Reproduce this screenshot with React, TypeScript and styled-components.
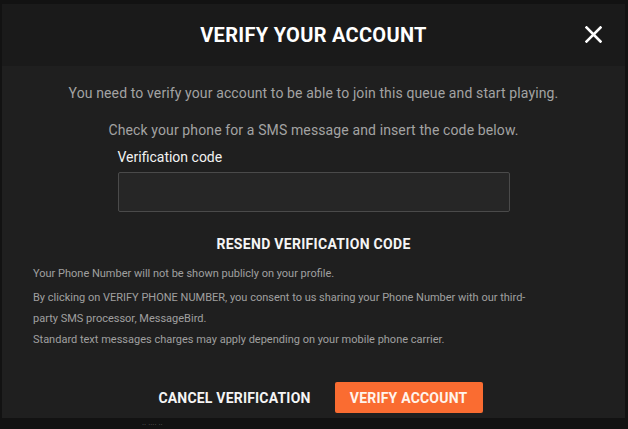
import React from "react";
import styled, { createGlobalStyle } from "styled-components";

const Global = createGlobalStyle`
  html, body { margin: 0; padding: 0; background: #131313; }
  body { font-family: Roboto, "Liberation Sans", sans-serif; -webkit-font-smoothing: antialiased; }
  * { box-sizing: border-box; }
`;

const Page = styled.div`
  width: 628px;
  height: 429px;
  overflow: hidden;
  background: #121212;
  display: flex;
  flex-direction: column;
  padding: 4px 3px 0 2px;
`;

const Modal = styled.div`
  display: flex;
  flex-direction: column;
  height: 414px;
  background: #1f1f1f;
`;

const Header = styled.div`
  height: 62px;
  background: #1a1a1a;
  display: flex;
  align-items: center;
  justify-content: center;
  position: relative;
  padding-bottom: 1px;
`;

const Title = styled.h1`
  margin: 0;
  color: #ffffff;
  font-size: 20px;
  line-height: 24px;
  font-weight: 700;
  letter-spacing: 0.3px;
`;

const Close = styled.button`
  position: absolute;
  right: 22px;
  top: 20px;
  width: 20px;
  height: 20px;
  padding: 0;
  border: 0;
  background: none;
  display: flex;
  align-items: center;
  justify-content: center;
`;

const Body = styled.div`
  flex: 1;
  display: flex;
  flex-direction: column;
  align-items: center;
  padding-top: 19px;
`;

const Lead = styled.p<{ $gap?: number }>`
  margin: 0 0 ${(p) => p.$gap ?? 0}px;
  color: #a3a3a3;
  font-size: 14px;
  line-height: 17px;
  letter-spacing: 0.12px;
  text-align: center;
`;

const Field = styled.div`
  width: 392px;
  display: flex;
  flex-direction: column;
  gap: 6px;
  margin-top: 10px;
`;

const Label = styled.label`
  color: #f2f2f2;
  font-size: 14px;
  line-height: 17px;
`;

const Input = styled.div`
  height: 40px;
  border: 1px solid #4a4a4a;
  border-radius: 2px;
  background: #262626;
`;

const Resend = styled.button`
  margin-top: 24px;
  border: 0;
  padding: 0;
  background: none;
  color: #f5f5f5;
  font-family: inherit;
  font-size: 14px;
  font-weight: 700;
  line-height: 17px;
  letter-spacing: 0.3px;
`;

const Notes = styled.div`
  align-self: stretch;
  padding: 10px 0 0 31px;
  display: flex;
  flex-direction: column;
`;

const Note = styled.p<{ $gap?: number }>`
  margin: 0 0 ${(p) => p.$gap ?? 0}px;
  color: #a0a0a0;
  font-size: 11px;
  line-height: 21px;
  max-width: 502px;
`;

const Actions = styled.div`
  display: flex;
  align-items: center;
  gap: 24px;
  margin-top: 32px;
  margin-left: 14px;
`;

const TextButton = styled.button`
  border: 0;
  background: none;
  padding: 0;
  color: #f5f5f5;
  font-family: inherit;
  font-size: 14px;
  font-weight: 700;
  letter-spacing: 0.2px;
`;

const Primary = styled.button`
  width: 148px;
  height: 31px;
  border: 0;
  border-radius: 2px;
  background: #fa6c31;
  color: #fff4ec;
  font-family: inherit;
  font-size: 14px;
  font-weight: 700;
  letter-spacing: 0.2px;
`;

const Footer = styled.div`
  height: 11px;
  padding-left: 140px;
  color: #5c5c5c;
  font-size: 8px;
  line-height: 14px;
  overflow: hidden;
`;

export default function App() {
  return (
    <>
      <Global />
      <Page>
        <Modal>
          <Header>
            <Title>VERIFY YOUR ACCOUNT</Title>
            <Close aria-label="Close">
              <svg width="17" height="17" viewBox="0 0 17 17">
                <path d="M1.5 1.5 L15.5 15.5 M15.5 1.5 L1.5 15.5" stroke="#ffffff" strokeWidth="2.6" strokeLinecap="square" />
              </svg>
            </Close>
          </Header>
          <Body>
            <Lead $gap={20}>You need to verify your account to be able to join this queue and start playing.</Lead>
            <Lead>Check your phone for a SMS message and insert the code below.</Lead>
            <Field>
              <Label>Verification code</Label>
              <Input />
            </Field>
            <Resend>RESEND VERIFICATION CODE</Resend>
            <Notes>
              <Note $gap={3}>Your Phone Number will not be shown publicly on your profile.</Note>
              <Note>
                By clicking on VERIFY PHONE NUMBER, you consent to us sharing your Phone Number with our third-party SMS processor, MessageBird.
              </Note>
              <Note>Standard text messages charges may apply depending on your mobile phone carrier.</Note>
            </Notes>
            <Actions>
              <TextButton>CANCEL VERIFICATION</TextButton>
              <Primary>VERIFY ACCOUNT</Primary>
            </Actions>
          </Body>
        </Modal>
        <Footer>·· ···· ··</Footer>
      </Page>
    </>
  );
}
